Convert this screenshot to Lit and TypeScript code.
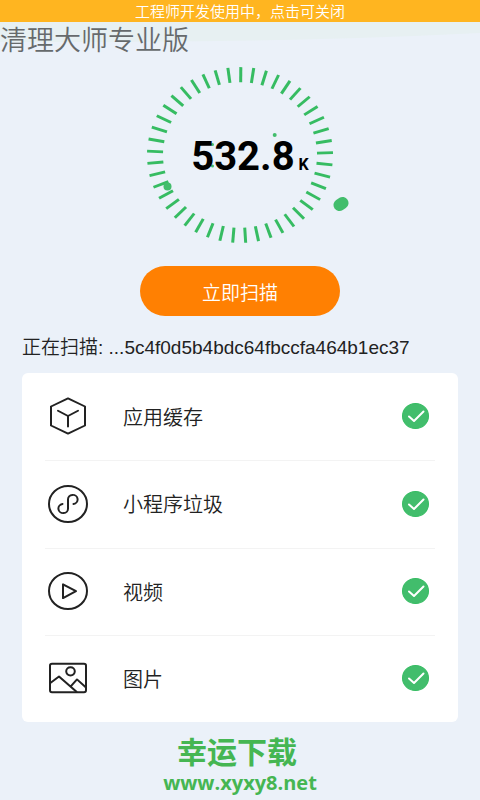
import { LitElement, html, svg, css } from "lit";
import { customElement, state } from "lit/decorators.js";

const TICKS = Array.from({ length: 45 }, (_, i) => i * 8 + 0.5);

const ICONS = {
  cache: svg`<path d="M20 1.500 37 10V30L20 38.500 3 30V10Z M10 14.500 20 20 30 14.500 M20 20V31" />`,
  mini: svg`<circle cx="20" cy="20" r="19" />
    <path d="M14.500 20A4.800 4.800 0 1 0 20 24.500V15.500A4.800 4.800 0 1 1 25.500 20" />`,
  video: svg`<circle cx="20" cy="20" r="19" /><path d="M15 13V27.500L28 20.200Z" />`,
  image: svg`<rect x="2" y="5" width="36" height="30" rx="2" /><circle cx="22.500" cy="13" r="4.300" />
    <path d="M2 25.500 11 18.500 28.500 34.500 M22.500 29 29 21.500 38 30" />`,
};

@customElement("app-root")
export class AppRoot extends LitElement {
  @state() private bannerOpen = true;

  private items = [
    { label: "应用缓存", icon: ICONS.cache },
    { label: "小程序垃圾", icon: ICONS.mini },
    { label: "视频", icon: ICONS.video },
    { label: "图片", icon: ICONS.image },
  ];

  static styles = css`
    :host {
      display: flex;
      flex-direction: column;
      position: relative;
      box-sizing: border-box;
      min-height: 100vh;
      background: #ebf1f9;
      color: #222;
      font-family: "Liberation Sans", "Noto Sans CJK SC", sans-serif;
      font-weight: 350;
    }
    * {
      box-sizing: border-box;
    }
    button {
      border: 0;
      font-family: inherit;
      font-weight: inherit;
      cursor: pointer;
    }
    .banner {
      height: 22px;
      padding: 0;
      background: #ffb520;
      color: #fff;
      font-size: 15px;
      line-height: 24px;
    }
    .title-bar {
      display: grid;
      height: 38px;
    }
    .title-bar > * {
      grid-area: 1 / 1;
    }
    .sheen {
      width: 100%;
      height: 20px;
      fill: #e7f0f2;
    }
    h1 {
      margin: 0;
      color: #666a6c;
      font-size: 27px;
      font-weight: 350;
      line-height: 38px;
    }
    .gauge {
      display: grid;
      place-items: center;
      align-self: center;
      margin-top: 5px;
    }
    .gauge > * {
      grid-area: 1 / 1;
    }
    .dial {
      width: 220px;
      height: 180px;
      stroke: #36bc62;
      stroke-width: 3;
      fill: #42bd6c;
    }
    .dots {
      stroke: none;
    }
    .reading {
      display: flex;
      align-items: baseline;
      gap: 4px;
      margin: 0;
      padding: 11px 0 0 20px;
      color: #000;
      font-family: Roboto, sans-serif;
      font-size: 40px;
      font-weight: 700;
      line-height: 48px;
    }
    .unit {
      font-size: 16px;
    }
    .scan {
      align-self: center;
      width: 200px;
      height: 50px;
      margin-top: 21px;
      border-radius: 25px;
      background: #ff8002;
      color: #fff;
      font-size: 19px;
    }
    .status {
      margin: 17px 22px 11px;
      font-size: 19px;
      line-height: 29px;
      white-space: nowrap;
      overflow: hidden;
    }
    .card {
      display: grid;
      grid-auto-rows: 1fr;
      min-height: 349px;
      margin: 0 22px;
      padding: 0 23px;
      border-radius: 6px;
      background: #fff;
      list-style: none;
    }
    .row + .row {
      border-top: 1px solid #f3f3f3;
    }
    .item {
      display: flex;
      align-items: center;
      height: 100%;
      padding: 0 6px 1px 3px;
      font-size: 20px;
    }
    .icon {
      width: 40px;
      height: 38px;
      margin-right: 35px;
      fill: none;
      stroke: #222;
      stroke-width: 2;
      stroke-linecap: round;
      stroke-linejoin: round;
    }
    .tick {
      display: grid;
      margin-left: auto;
    }
    .tick > * {
      grid-area: 1 / 1;
      width: 27px;
      height: 26px;
      margin: 0;
    }
    .box {
      appearance: none;
      border: 1px solid #36bc62;
      border-radius: 50%;
      background: #42bd6c;
    }
    .box:not(:checked) {
      background: #fff;
    }
    .mark {
      pointer-events: none;
      fill: none;
      stroke: #fff;
      stroke-width: 2;
      stroke-linecap: round;
      stroke-linejoin: round;
    }
    .site {
      align-self: center;
      display: flex;
      flex-direction: column;
      align-items: center;
      padding-top: 7px;
      color: #45b652;
      font-family: "Open Sans", "Noto Sans CJK SC", sans-serif;
      font-size: 20px;
      font-weight: 700;
      line-height: 24px;
      text-decoration: none;
    }
    .site-name {
      padding-right: 6px;
      font-family: "Noto Sans CJK SC", sans-serif;
      font-size: 30px;
      line-height: 42px;
    }
  `;

  render() {
    return html`
      ${this.bannerOpen
        ? html`<button class="banner" @click=${() => (this.bannerOpen = false)}>
            工程师开发使用中，点击可关闭
          </button>`
        : null}
      <header class="title-bar">
        <svg class="sheen" viewBox="0 0 480 20" preserveAspectRatio="none" aria-hidden="true">
          <path d="M0 0H480V11Q300 20 100 20H0Z" />
        </svg>
        <h1>清理大师专业版</h1>
      </header>
      <section class="gauge">
        <svg class="dial" viewBox="0 0 220 180" aria-hidden="true">
          <g transform="translate(110 90) scale(1 .945)">
            ${TICKS.map((a) => svg`<path d="M0 -93V-77" transform="rotate(${a})" />`)}
          </g>
          <g class="dots">
            <circle cx="144.700" cy="70" r="2" />
            <circle cx="82.500" cy="79.500" r="1.500" />
            <circle cx="82.500" cy="101" r="1.500" />
            <circle cx="37.500" cy="121.500" r="4" />
            <path d="M209.500 140 212.500 138" stroke="#42bd6c" stroke-width="12" stroke-linecap="round" />
          </g>
        </svg>
        <p class="reading">532.8<span class="unit">K</span></p>
      </section>
      <button class="scan">立即扫描</button>
      <p class="status">正在扫描: ...5c4f0d5b4bdc64fbccfa464b1ec37</p>
      <ul class="card">
        ${this.items.map(
          (item) => html`<li class="row">
            <label class="item">
              <svg class="icon" viewBox="0 0 40 40" preserveAspectRatio="none" aria-hidden="true">${item.icon}</svg>
              ${item.label}
              <span class="tick">
                <input class="box" type="checkbox" checked />
                <svg class="mark" viewBox="0 0 27 26" aria-hidden="true"><path d="M7 13.500 12 18 21.500 8.500" /></svg>
              </span>
            </label>
          </li>`
        )}
      </ul>
      <a class="site" href="http://www.xyxy8.net"><span class="site-name">幸运下载</span>www.xyxy8.net</a>
    `;
  }
}
